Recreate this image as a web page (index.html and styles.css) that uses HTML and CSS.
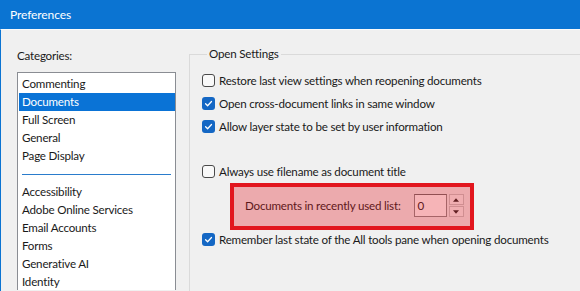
FILE: index.html
```html
<!DOCTYPE html>
<html>
<head>
<meta charset="utf-8">
<link rel="stylesheet" href="styles.css">
</head>
<body>
<div class="titlebar">Preferences</div>
<div class="window">
  <div class="left">
    <div class="cat-label">Categories:</div>
    <ul class="list">
      <li>Commenting</li>
      <li class="sel">Documents</li>
      <li>Full Screen</li>
      <li>General</li>
      <li>Page Display</li>
      <li class="sep"></li>
      <li>Accessibility</li>
      <li>Adobe Online Services</li>
      <li>Email Accounts</li>
      <li>Forms</li>
      <li>Generative AI</li>
      <li>Identity</li>
    </ul>
  </div>
  <fieldset class="group">
    <legend>Open Settings</legend>
    <div class="row"><span class="cb"></span>Restore last view settings when reopening documents</div>
    <div class="row"><svg class="cb-on" viewBox="0 0 13 13" width="13" height="13"><rect x="0" y="0" width="13" height="13" rx="3" fill="#1467c4"/><path d="M3.6 6.8 L5.6 8.7 L9.5 4.5" fill="none" stroke="#fff" stroke-width="1.3" stroke-linecap="round" stroke-linejoin="round"/></svg>Open cross-document links in same window</div>
    <div class="row"><svg class="cb-on" viewBox="0 0 13 13" width="13" height="13"><rect x="0" y="0" width="13" height="13" rx="3" fill="#1467c4"/><path d="M3.6 6.8 L5.6 8.7 L9.5 4.5" fill="none" stroke="#fff" stroke-width="1.3" stroke-linecap="round" stroke-linejoin="round"/></svg>Allow layer state to be set by user information</div>
    <div class="row row-gap"><span class="cb"></span>Always use filename as document title</div>
    <div class="row spin-row">
      <span class="spin-label">Documents in recently used list:</span>
      <span class="num-input">0</span>
      <span class="spinner">
        <span class="spin-btn"><svg viewBox="0 0 7 4" width="6" height="4"><path d="M0 4 L3.5 0 L7 4 Z" fill="#222"/></svg></span>
        <span class="spin-btn"><svg viewBox="0 0 7 4" width="6" height="4"><path d="M0 0 L7 0 L3.5 4 Z" fill="#222"/></svg></span>
      </span>
      <span class="highlight"></span>
    </div>
    <div class="row row-last"><svg class="cb-on" viewBox="0 0 13 13" width="13" height="13"><rect x="0" y="0" width="13" height="13" rx="3" fill="#1467c4"/><path d="M3.6 6.8 L5.6 8.7 L9.5 4.5" fill="none" stroke="#fff" stroke-width="1.3" stroke-linecap="round" stroke-linejoin="round"/></svg>Remember last state of the All tools pane when opening documents</div>
  </fieldset>
</div>
</body>
</html>
```
FILE: styles.css
```css
html, body {
  margin: 0;
  padding: 0;
  overflow: hidden;
}
body {
  width: 580px;
  height: 291px;
  background: #f0f0f0;
  font-family: Lato, "Liberation Sans", sans-serif;
  font-size: 11.6px;
  letter-spacing: -0.2px;
  color: #1a1a1a;
}
.titlebar {
  height: 29px;
  line-height: 29px;
  padding-left: 10px;
  background: #0b74d2;
  color: #ffffff;
  font-size: 12px;
  letter-spacing: -0.1px;
}
.window {
  display: flex;
  align-items: flex-start;
  height: 262px;
  border-left: 1px solid #0b74d2;
  border-top: 1px solid #fbfbfb;
  box-sizing: border-box;
}
.left {
  padding-left: 16px;
  width: 159px;
  flex: none;
}
.cat-label {
  margin-top: 17px;
  line-height: 18px;
}
.list {
  list-style: none;
  margin: 7px 0 0 0;
  padding: 2px 0 0 1px;
  height: 218px;
  background: #ffffff;
  border: 1px solid #8a8d93;
  border-bottom: none;
  box-sizing: border-box;
  width: 159px;
  overflow: hidden;
}
.list li {
  height: 18px;
  line-height: 18px;
  padding-left: 3px;
  white-space: nowrap;
}
.list li.sel {
  background: #0a73d6;
  color: #ffffff;
}
.list li.sep {
  display: flex;
  align-items: center;
  padding: 0 4px 0 3px;
}
.list li.sep::after {
  content: "";
  flex: 1;
  height: 1px;
  background: #2a7ccc;
}
.group {
  flex: 1;
  margin: 15px 0 0 13px;
  padding: 6px 0 0 12px;
  border: 1px solid #dadada;
  border-right: none;
  border-bottom: none;
  height: 246px;
  box-sizing: border-box;
  min-width: 0;
}
.group legend {
  margin-left: 5px;
  padding: 0 2px;
  line-height: 18px;
}
.row {
  display: flex;
  align-items: center;
  height: 23px;
  white-space: nowrap;
}
.cb {
  width: 13px;
  height: 13px;
  box-sizing: border-box;
  border: 1px solid #4a4a4a;
  border-radius: 3px;
  background: #f9f9f9;
  margin-right: 4px;
  flex: none;
}
.cb-on {
  margin-right: 4px;
  flex: none;
}
.row-gap {
  margin-top: 22px;
}
.spin-row {
  position: relative;
  margin-top: 11px;
  padding-left: 43px;
}
.row-last {
  margin-top: 11px;
}
.spin-label {
  margin-right: 13px;
  flex: none;
}
.num-input {
  flex: none;
  width: 33px;
  height: 23px;
  box-sizing: border-box;
  background: #ffffff;
  border: 1px solid #8a8a8a;
  border-top-color: #6a6a6a;
  padding-left: 3px;
  line-height: 21px;
}
.spinner {
  flex: none;
  display: flex;
  flex-direction: column;
  margin-left: 2px;
  height: 23px;
  width: 15px;
  gap: 1px;
}
.spin-btn {
  flex: 1;
  display: flex;
  align-items: center;
  justify-content: center;
  background: #f7f7f7;
  border: 1px solid #c8c8c8;
}
.highlight {
  position: absolute;
  left: 28px;
  top: -11px;
  width: 244px;
  height: 47px;
  box-sizing: border-box;
  border: 4px solid #e2161e;
  background: rgba(226, 22, 30, 0.32);
}
```
